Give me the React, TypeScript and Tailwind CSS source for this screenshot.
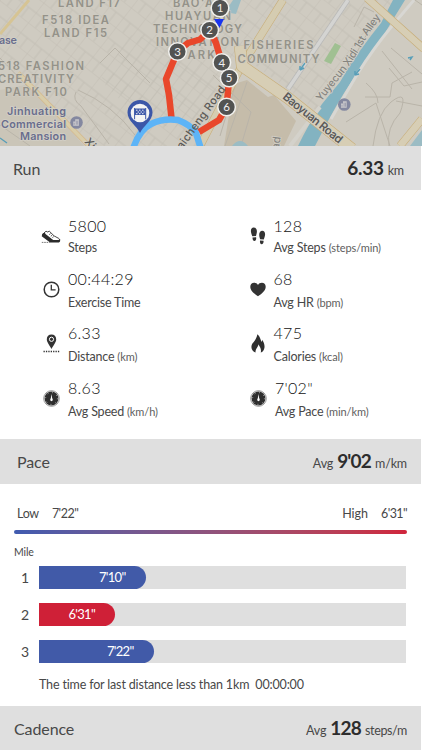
import type { ReactNode } from 'react';

const stats = [
  { icon: <ShoeIcon />, value: '5800', label: 'Steps' },
  { icon: <StepsIcon />, value: '128', label: 'Avg Steps', unit: '(steps/min)' },
  { icon: <ClockIcon />, value: '00:44:29', label: 'Exercise Time' },
  { icon: <HeartIcon />, value: '68', label: 'Avg HR', unit: '(bpm)' },
  { icon: <DistanceIcon />, value: '6.33', label: 'Distance', unit: '(km)' },
  { icon: <FlameIcon />, value: '475', label: 'Calories', unit: '(kcal)' },
  { icon: <GaugeIcon />, value: '8.63', label: 'Avg Speed', unit: '(km/h)' },
  { icon: <GaugeIcon />, value: `7'02"`, label: 'Avg Pace', unit: '(min/km)' },
];

const miles = [
  { mile: 1, pace: `7'10"`, width: 106.5, color: 'bg-[#415aa8]' },
  { mile: 2, pace: `6'31"`, width: 76, color: 'bg-[#cf2037]' },
  { mile: 3, pace: `7'22"`, width: 114.5, color: 'bg-[#415aa8]' },
];

const markers = [
  { n: 1, x: 220, y: 8 },
  { n: 3, x: 177.5, y: 51.5 },
  { n: 2, x: 209.7, y: 30 },
  { n: 4, x: 221.8, y: 62.5 },
  { n: 5, x: 229.2, y: 78 },
  { n: 6, x: 226.6, y: 107 },
];

const places = [
  { text: 'LAND F17', x: 58, y: 7, w: 62 },
  { text: 'F518 IDEA', x: 42, y: 23.5, w: 67 },
  { text: 'LAND F15', x: 44, y: 36.5, w: 63 },
  { text: '518 FASHION', x: -2, y: 69.5, w: 86 },
  { text: 'CREATIVITY', x: -2, y: 82.5, w: 76 },
  { text: 'PARK F10', x: 5, y: 96, w: 62 },
  { text: "BAO'AN", x: 173, y: 6.5, w: 50 },
  { text: 'HUAYUAN', x: 165, y: 19.5, w: 66 },
  { text: 'TECHNOLOGY', x: 153, y: 33, w: 89 },
  { text: 'INNOVATION', x: 156, y: 45.8, w: 83 },
  { text: 'PARK', x: 179, y: 59, w: 36 },
  { text: 'FISHERIES', x: 243.5, y: 49, w: 70 },
  { text: 'COMMUNITY', x: 237.5, y: 62.5, w: 82 },
];

function ShoeIcon() {
  return (
    <svg width="20" height="15" viewBox="0 0 20 15">
      <path d="M1.8 5.2 5 2.2l1.7.8 1.6-.8 4.8 4.7 4.8 2.6c1 .6.9 1.7.5 2.3H11L1.5 6.4z" fill="#fff" stroke="#333" strokeWidth=".9" />
      <path d="M1.4 4.8.7 7.3l8.4 6.1h8.7c1.4 0 1.700-2 1-3.3l-1.2 1h-5.4L4.5 4.9 3.7 3.5z" fill="#2b2b2b" />
      <path d="M8.2 5.6l1.4-1M9.8 7.2l1.4-1M11.4 8.6l1.3-1" stroke="#333" strokeWidth=".8" />
      <path d="M.8 13.4h8" stroke="#555" strokeWidth=".8" strokeDasharray="1.6 .8" />
    </svg>
  );
}

function StepsIcon() {
  return (
    <svg width="16" height="18" viewBox="0 0 16 18" fill="#333">
      <path d="M.9 4.2C.8 2 2 .5 3.7.6 5.7.6 7 2.3 6.9 4.6c0 1.5-.4 2.6-.9 4.5L2.3 9.2C1.7 7.4 1 5.9.9 4.2z" />
      <path d="M2.5 10.4l3.6-.1c.3 2.4-.4 3.6-1.6 3.7-1.3 0-2.1-1.3-2-3.6z" />
      <path d="M9.2 7.8C9.1 5.5 10.4 3.8 12.3 3.8c1.7 0 2.9 1.5 2.8 3.6-.1 1.8-.8 3.3-1.3 5.1l-3.7-.2c-.4-1.7-.9-2.9-.9-4.5z" />
      <path d="M10 13.5l3.6.2c.1 2.2-.7 3.5-2 3.5-1.2-.1-1.9-1.3-1.6-3.7z" />
    </svg>
  );
}

function ClockIcon() {
  return (
    <svg width="17" height="17" viewBox="0 0 17 17" fill="none" stroke="#333">
      <circle cx="8.5" cy="8.5" r="7.3" strokeWidth="1.5" />
      <path d="M8.3 3.8v5h4.3" strokeWidth="1.3" />
    </svg>
  );
}

function HeartIcon() {
  return (
    <svg width="16" height="15" viewBox="0 0 16 15">
      <path d="M8 14.2C5.5 12.3.4 9.2.3 4.9.2 2.3 1.9.7 4.1.7 5.9.7 7.2 1.6 8 3 8.8 1.6 10.1.7 11.9.7c2.2 0 3.9 1.6 3.8 4.2C15.6 9.2 10.5 12.3 8 14.2z" fill="#333" />
    </svg>
  );
}

function DistanceIcon() {
  return (
    <svg width="17" height="19" viewBox="0 0 17 19">
      <path d="M8.5.6c2.8 0 4.7 2 4.7 4.6 0 3.2-2.6 5.5-4.7 9.8C6.4 10.7 3.8 8.4 3.8 5.2 3.8 2.6 5.7.6 8.5.6z" fill="#333" />
      <circle cx="8.5" cy="5.3" r="2.1" fill="#333" stroke="#fff" strokeWidth="1" />
      <path d="M.5 17.5h16" stroke="#333" strokeWidth="1.3" strokeDasharray="1.3 1.1" />
    </svg>
  );
}

function FlameIcon() {
  return (
    <svg width="14" height="19" viewBox="0 0 14 19">
      <path d="M6.3.3c3 2.4 2.9 4.9 4.2 7.6.5-.7.6-1.4.5-2.2 2 2.2 2.9 5.6 2.4 8.2-.4 2.3-1.8 3.9-3.7 4.7.9-3.1-.4-5.5-2.4-8.4.2 2.8-3.1 4.4-2.8 8.4C2.2 17.7.5 15.7.4 13c0-3.3 2-4.3 3.6-6.8C5.3 4.3 6 2.6 6.3.3z" fill="#2f2f2f" />
    </svg>
  );
}

function GaugeIcon() {
  return (
    <svg width="17" height="17" viewBox="0 0 17 17">
      <circle cx="8.5" cy="8.5" r="7.8" fill="#fff" stroke="#777" strokeWidth=".8" />
      <circle cx="8.5" cy="8.5" r="6.9" fill="#2e2e2e" />
      <circle cx="8.5" cy="8.5" r="5.9" fill="none" stroke="#ddd" strokeWidth="1" strokeDasharray=".7 3.93" />
      <path d="M8.5 4l.7 4.3c.8.7.9 2.9-.7 2.9s-1.5-2.2-.7-2.9z" fill="#fff" />
    </svg>
  );
}

function Building({ x, y }: { x: number; y: number }) {
  return (
    <g transform={`translate(${x} ${y})`}>
      <circle r="6.3" fill="#8488a0" />
      <path d="M-3.3 3.2v-4.2h2v-2.3h3.7v6.5z" fill="#c9c8cc" />
      <path d="M-.2-1.8v4M1.2-1.8v4M-2.3.3v2" stroke="#8488a0" strokeWidth=".6" />
    </g>
  );
}

function RouteMap() {
  return (
    <svg className="block h-[146px] w-full shrink-0" viewBox="0 0 422 146">
      <defs>
        <pattern id="blocks" width="18" height="25" patternUnits="userSpaceOnUse" patternTransform="rotate(38)">
          <path d="M0 0H18M0 0V25M0 13H18M9 13V25" fill="none" stroke="#c0bcb2" strokeWidth=".8" />
        </pattern>
        <pattern id="lanes" width="9" height="28" patternUnits="userSpaceOnUse" patternTransform="rotate(37)">
          <path d="M0 0V28M0 0H9" fill="none" stroke="#bfbbb1" strokeWidth=".8" />
        </pattern>
        <path id="alley" d="M321 102 L344 73 Q358 54 368 35 L386 10" />
      </defs>
      <rect width="422" height="146" fill="#cfcbc1" />

      {/* street grid */}
      <path d="M0 0H282L239 67L205 146H88L20 75L0 62z" fill="url(#blocks)" />
      <path d="M130 35L185 45L220 80L200 130L145 124L100 80z" fill="url(#lanes)" />
      <path d="M285 0H395L345 75L318 112L255 65z" fill="url(#blocks)" />
      <path d="M0 90L30 84L84 146H0z" fill="#cac5b8" />
      <path d="M234 84l13-4 21 17 6-2 22 26-12 25h-60z" fill="#c5bcaa" />
      <g fill="none" stroke="#b9b4a9" strokeWidth="1">
        <path d="M100 63l15-15 35 35M78 90q35 15 57 45M76 92q-4 8 5 14l28 38M0 58l28 29M0 125l30 21M238 76l-18 60M247 82l-22 64M213 75l38 37-10 34M365 97h25l2-14 20-11M389 68l15 18 18-4M346 122l30-19 14 43M373 146q4-33 18-44 18-14 9 11-14 15-11 33M396 101l26 5M366 83q12 10 12 20" />
        <path d="M354 27l10-20 10 5M374 21l-28 51M391 48l31 26M415 0l7 5M382 51l30 38" />
      </g>

      {/* river */}
      <path d="M393 0L381 23Q356 54 340 82L322 104Q309 123 298 146H315L328 121Q345 89 362 67Q379 44 392 21L405 0z" fill="#83b3c1" />
      <path d="M225 12l8-12h8l-5 14zM232 146q8-10 16 0zM410 146l12-16v16z" fill="#9bbcc4" />
      <path d="M414 0L392 26Q373 49 358 73L331 119" fill="none" stroke="#d8d7d3" strokeWidth="3" />

      {/* roads */}
      <g fill="none" strokeLinejoin="round">
        <path d="M18 73L91 148" stroke="#d5b98d" strokeWidth="5" />
        <path d="M18 73L91 148" stroke="#d9cda9" strokeWidth="3.5" />
        <path d="M29 0L0 34" stroke="#d6c494" strokeWidth="3" />
        <path d="M348 0L288 89" stroke="#b9b9b8" strokeWidth="5" />
        <path d="M348 0L288 89" stroke="#d4d4d2" strokeWidth="3.5" />
        <path d="M320 107L290 146" stroke="#d4d2cb" strokeWidth="4" />
        <path d="M283 0L241 67L200 146" stroke="#c8ae79" strokeWidth="8" />
        <path d="M283 0L241 67L200 146" stroke="#d5ccb1" strokeWidth="6.8" />
        <path d="M240 46L242 66L288 98L352 149" stroke="#c8ae79" strokeWidth="12" />
        <path d="M240 46L242 66L288 98L352 149" stroke="#d7ceb5" strokeWidth="10.8" />
        <path d="M367 -2L424 49M422 119L400 146" stroke="#c8ae79" strokeWidth="8" />
        <path d="M367 -2L424 49M422 119L400 146" stroke="#d7ceb5" strokeWidth="6.8" />
      </g>
      <path d="M335 43l6 3-10 18-7-3z" fill="#a0c092" />
      <path d="M305 63l-5 7m0 0v-4m0 4l4-2M360 69l-5 6m0 0v-4m0 4l4-1M408 58l4-1-2 3M0 138l7 5" fill="none" stroke="#589eb8" strokeWidth="1.4" />

      {/* place names */}
      <g fontFamily="Inter, sans-serif" fontSize="11.2" fontWeight="600" fill="#949289" stroke="#d0cdc4" strokeWidth="1.2" paintOrder="stroke">
        {places.map((p) => (
          <text key={p.text} x={p.x} y={p.y} textLength={p.w}>{p.text}</text>
        ))}
      </g>
      <g fontFamily="Inter, sans-serif" fontSize="10.8" fontWeight="600" fill="#696d8d" stroke="#d3d0c7" strokeWidth="1.5" paintOrder="stroke">
        <text x="-1" y="44" textLength="18">ase</text>
        <text x="7" y="115" textLength="59">Jinhuating</text>
        <text x="1" y="127.5" textLength="65">Commercial</text>
        <text x="20" y="139.5" textLength="46">Mansion</text>
      </g>
      <Building x={76.5} y={122.5} />
      <Building x={344.3} y={104.5} />
      <g fontFamily="Inter, sans-serif" fontSize="11" fontWeight="500" fill="#5b5a57" stroke="#d3d0c7" strokeWidth="1.5" paintOrder="stroke">
        <text transform="translate(282 98) rotate(39)" textLength="73" fontSize="11.5" fontWeight="600">Baoyuan Road</text>
        <text fill="#85847f" fontSize="10.5"><textPath href="#alley" textLength="104">Yuyecun Xidi 1st Alley</textPath></text>
        <text transform="translate(84 142) rotate(48)">Xi</text>
        <text transform="translate(279 150) rotate(-82)" fill="#85847f">ad</text>
      </g>

      {/* route */}
      <g fill="none" strokeLinejoin="round">
        <path d="M171.500 118L169 95L166 79L177.500 51.500L188 43L200 39.500L209.700 30L216 43L221.800 62.500L229.200 78L226.600 107L219 120L199 132" stroke="#e9472b" strokeWidth="6.5" />
        <path d="M133 149Q139 130 151 124Q163 118 178 120Q191 125 196 133L201 149" stroke="#5db4f7" strokeWidth="6.5" />
      </g>
      <text
        transform="translate(182 150) rotate(-54)"
        textLength="75"
        fontFamily="Inter, sans-serif"
        fontSize="11"
        fontWeight="500"
        fill="#5b5a57"
      >
        aicheng Road
      </text>
      <path d="M214 19h10l-4.500 9z" fill="#1a35ef" />
      {markers.map((m) => (
        <g key={m.n}>
          <circle cx={m.x} cy={m.y} r="8.8" fill="#525352" stroke="#f0f0ed" strokeWidth="1.5" />
          <text x={m.x} y={m.y + 4} textAnchor="middle" fontFamily="Lato, sans-serif" fontSize="11.5" fontWeight="400" fill="#f2f2f2">{m.n}</text>
        </g>
      ))}

      {/* finish pin */}
      <path d="M140 133C137 126 127.500 121 127.500 112.500a12.500 12.500 0 0 1 25 0C152.500 121 143 126 140 133z" fill="#3c57a8" />
      <circle cx="140" cy="113" r="9.3" fill="#f4f4f4" />
      <path d="M134.600 108v11.300M145.700 108v11.300" stroke="#3c57a8" strokeWidth="1" />
      <path d="M134.600 108.500h11v6.500h-11z" fill="#3c57a8" />
      <path d="M136 110.200h8.500M137.500 112h7M136 113.700h8.500" stroke="#e8eaf2" strokeWidth="1" strokeDasharray="1.5 1.5" />
    </svg>
  );
}

function SectionHeader({ title, className, children }: { title: string; className: string; children: ReactNode }) {
  return (
    <div className={`flex w-[421px] shrink-0 items-center justify-between bg-[#dfdfdf] ${className}`}>
      <h2 className="pt-[1px] text-[16px] tracking-[-0.1px]">{title}</h2>
      <p className="flex items-baseline text-[12.5px] tracking-[-0.15px]">{children}</p>
    </div>
  );
}

function Big({ children }: { children: ReactNode }) {
  return <span className="mx-1 text-[19px] font-bold tracking-[-0.8px] text-[#2d2d2d]">{children}</span>;
}

export default function App() {
  return (
    <div className="flex h-[750px] w-full flex-col overflow-hidden bg-white font-['Lato',sans-serif] text-[#484848] [font-variant-ligatures:none]">
      <RouteMap />

      <SectionHeader title="Run" className="h-[44px] pr-[17px] pl-[13px]">
        <span className="mr-1 text-[19px] font-bold tracking-[-0.3px] text-[#2d2d2d]">6.33</span>km
      </SectionHeader>

      <section className="grid h-[249px] shrink-0 grid-cols-[207px_1fr] grid-rows-[53px_54px_55px_54px] pt-[25px] pl-[40px]">
        {stats.map((s, i) => (
          <div key={s.label} className="flex">
            <div className="flex h-[38px] w-[22px] items-center justify-center pt-1">{s.icon}</div>
            <div className={i % 2 === 1 && i < 7 ? 'ml-[4.5px]' : 'ml-[6px]'}>
              <div className="h-[22px] text-[16px] leading-[22px] font-light tracking-[0.3px] text-[#111]">{s.value}</div>
              <div className={`h-[22px] text-[12.5px] leading-[22px] tracking-[-0.2px] ${i > 1 ? 'mt-[2px]' : ''}`}>
                {s.label} {s.unit && <span className="text-[11px] tracking-[-0.1px] text-[#5e5e5e]">{s.unit}</span>}
              </div>
            </div>
          </div>
        ))}
      </section>

      <SectionHeader title="Pace" className="h-[45px] pr-[14px] pl-[17px]">
        Avg<Big>9'02</Big>m/km
      </SectionHeader>

      <section className="h-[222px] shrink-0 pt-[20px] pr-[15px] pl-[14px]">
        <div className="flex h-[20px] items-center justify-between pl-[3px] text-[12.5px]">
          <p className="flex gap-[13px]"><span className="tracking-[-0.3px]">Low</span><span className="tracking-[-0.5px]">7'22"</span></p>
          <p className="flex gap-[13px]"><span>High</span><span className="tracking-[-0.6px]">6'31"</span></p>
        </div>
        <div className="mt-[6px] h-[4px] rounded-full bg-linear-to-r from-[#3f5bb0] to-[#d0243b]" />
        <p className="mt-[10px] h-[16px] text-[10.5px] leading-[16px] tracking-[-0.1px]">Mile</p>
        <div className="mt-[6px] flex flex-col gap-[14px]">
          {miles.map((m) => (
            <div key={m.mile} className="flex h-[23px] items-center">
              <span className="w-[25px] pl-[7px] text-[14px]">{m.mile}</span>
              <div className="h-full w-[367px] bg-[#dfdfdf]">
                <div
                  className={`flex h-full items-center justify-end rounded-r-full pr-[20px] text-[13px] tracking-[-0.7px] text-white ${m.color}`}
                  style={{ width: m.width }}
                >
                  {m.pace}
                </div>
              </div>
            </div>
          ))}
        </div>
        <p className="mt-[12px] pl-[25px] text-[12.5px] leading-[20px] tracking-[-0.16px] whitespace-pre">
          The time for last distance less than 1km  00:00:00
        </p>
      </section>

      <SectionHeader title="Cadence" className="h-[45px] pr-[14px] pl-[14px]">
        Avg<Big>128</Big><span className="tracking-[-0.35px]">steps/m</span>
      </SectionHeader>
    </div>
  );
}
